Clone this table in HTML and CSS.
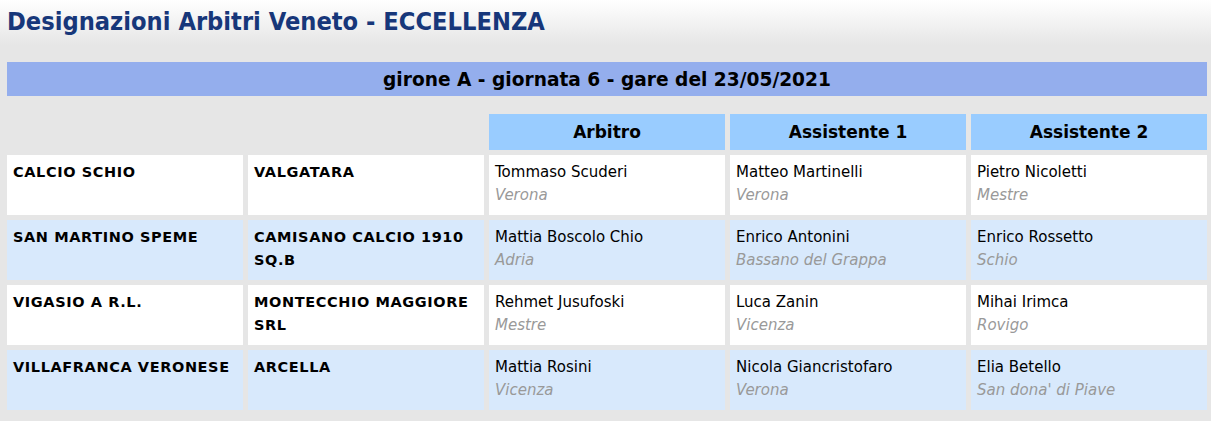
FILE: index.html
```html
<!DOCTYPE html>
<html lang="it">
<head>
<meta charset="utf-8">
<title>Designazioni Arbitri Veneto - ECCELLENZA</title>
<link rel="stylesheet" href="styles.css">
</head>
<body>
<div class="page">
  <h1 class="title">Designazioni Arbitri Veneto - ECCELLENZA</h1>
  <div class="band">girone A - giornata 6 - gare del 23/05/2021</div>
  <div class="grid">
    <div class="blank"></div>
    <div class="blank"></div>
    <div class="head">Arbitro</div>
    <div class="head">Assistente 1</div>
    <div class="head">Assistente 2</div>

    <div class="cell team odd">CALCIO SCHIO</div>
    <div class="cell team odd">VALGATARA</div>
    <div class="cell ref odd"><span class="name">Tommaso Scuderi</span><span class="city">Verona</span></div>
    <div class="cell ref odd"><span class="name">Matteo Martinelli</span><span class="city">Verona</span></div>
    <div class="cell ref odd"><span class="name">Pietro Nicoletti</span><span class="city">Mestre</span></div>

    <div class="cell team even">SAN MARTINO SPEME</div>
    <div class="cell team even">CAMISANO CALCIO 1910 SQ.B</div>
    <div class="cell ref even"><span class="name">Mattia Boscolo Chio</span><span class="city">Adria</span></div>
    <div class="cell ref even"><span class="name">Enrico Antonini</span><span class="city">Bassano del Grappa</span></div>
    <div class="cell ref even"><span class="name">Enrico Rossetto</span><span class="city">Schio</span></div>

    <div class="cell team odd">VIGASIO A R.L.</div>
    <div class="cell team odd">MONTECCHIO MAGGIORE SRL</div>
    <div class="cell ref odd"><span class="name">Rehmet Jusufoski</span><span class="city">Mestre</span></div>
    <div class="cell ref odd"><span class="name">Luca Zanin</span><span class="city">Vicenza</span></div>
    <div class="cell ref odd"><span class="name">Mihai Irimca</span><span class="city">Rovigo</span></div>

    <div class="cell team even">VILLAFRANCA VERONESE</div>
    <div class="cell team even">ARCELLA</div>
    <div class="cell ref even"><span class="name">Mattia Rosini</span><span class="city">Vicenza</span></div>
    <div class="cell ref even"><span class="name">Nicola Giancristofaro</span><span class="city">Verona</span></div>
    <div class="cell ref even"><span class="name">Elia Betello</span><span class="city">San dona' di Piave</span></div>
  </div>
</div>
</body>
</html>
```

FILE: styles.css
```css
html, body {
  margin: 0;
  padding: 0;
}
body {
  background: linear-gradient(to bottom, #ffffff 0px, #e6e6e6 45px, #e6e6e6 100%);
  background-color: #e6e6e6;
  min-height: 421px;
  font-family: "DejaVu Sans", sans-serif;
}
.page {
  padding: 0 4px 0 7px;
}
.title {
  margin: 0;
  padding-top: 7px;
  height: 62px;
  box-sizing: border-box;
  font-family: "DejaVu Sans Condensed", "DejaVu Sans", sans-serif;
  font-size: 25.2px;
  line-height: 30px;
  font-weight: bold;
  color: #17377a;
}
.band {
  height: 34px;
  box-sizing: border-box;
  padding-top: 2px;
  line-height: 32px;
  background: #94aeed;
  text-align: center;
  font-size: 18.6px;
  font-weight: bold;
  color: #000;
}
.grid {
  margin-top: 18px;
  display: grid;
  grid-template-columns: repeat(5, 1fr);
  grid-auto-rows: 60px;
  grid-template-rows: 36px;
  gap: 5px;
}
.head {
  background: #99ccff;
  text-align: center;
  font-size: 17px;
  font-weight: bold;
  line-height: 36px;
  color: #000;
}
.cell {
  padding: 6px 6px 0 6px;
  line-height: 23px;
}
.odd { background: #ffffff; }
.even { background: #d8e9fc; }
.team {
  font-weight: bold;
  font-size: 14.5px;
  letter-spacing: 0.6px;
  color: #000;
}
.ref {
  display: flex;
  flex-direction: column;
  font-size: 15px;
}
.name { color: #000; }
.city {
  color: #999999;
  font-style: italic;
}
```
